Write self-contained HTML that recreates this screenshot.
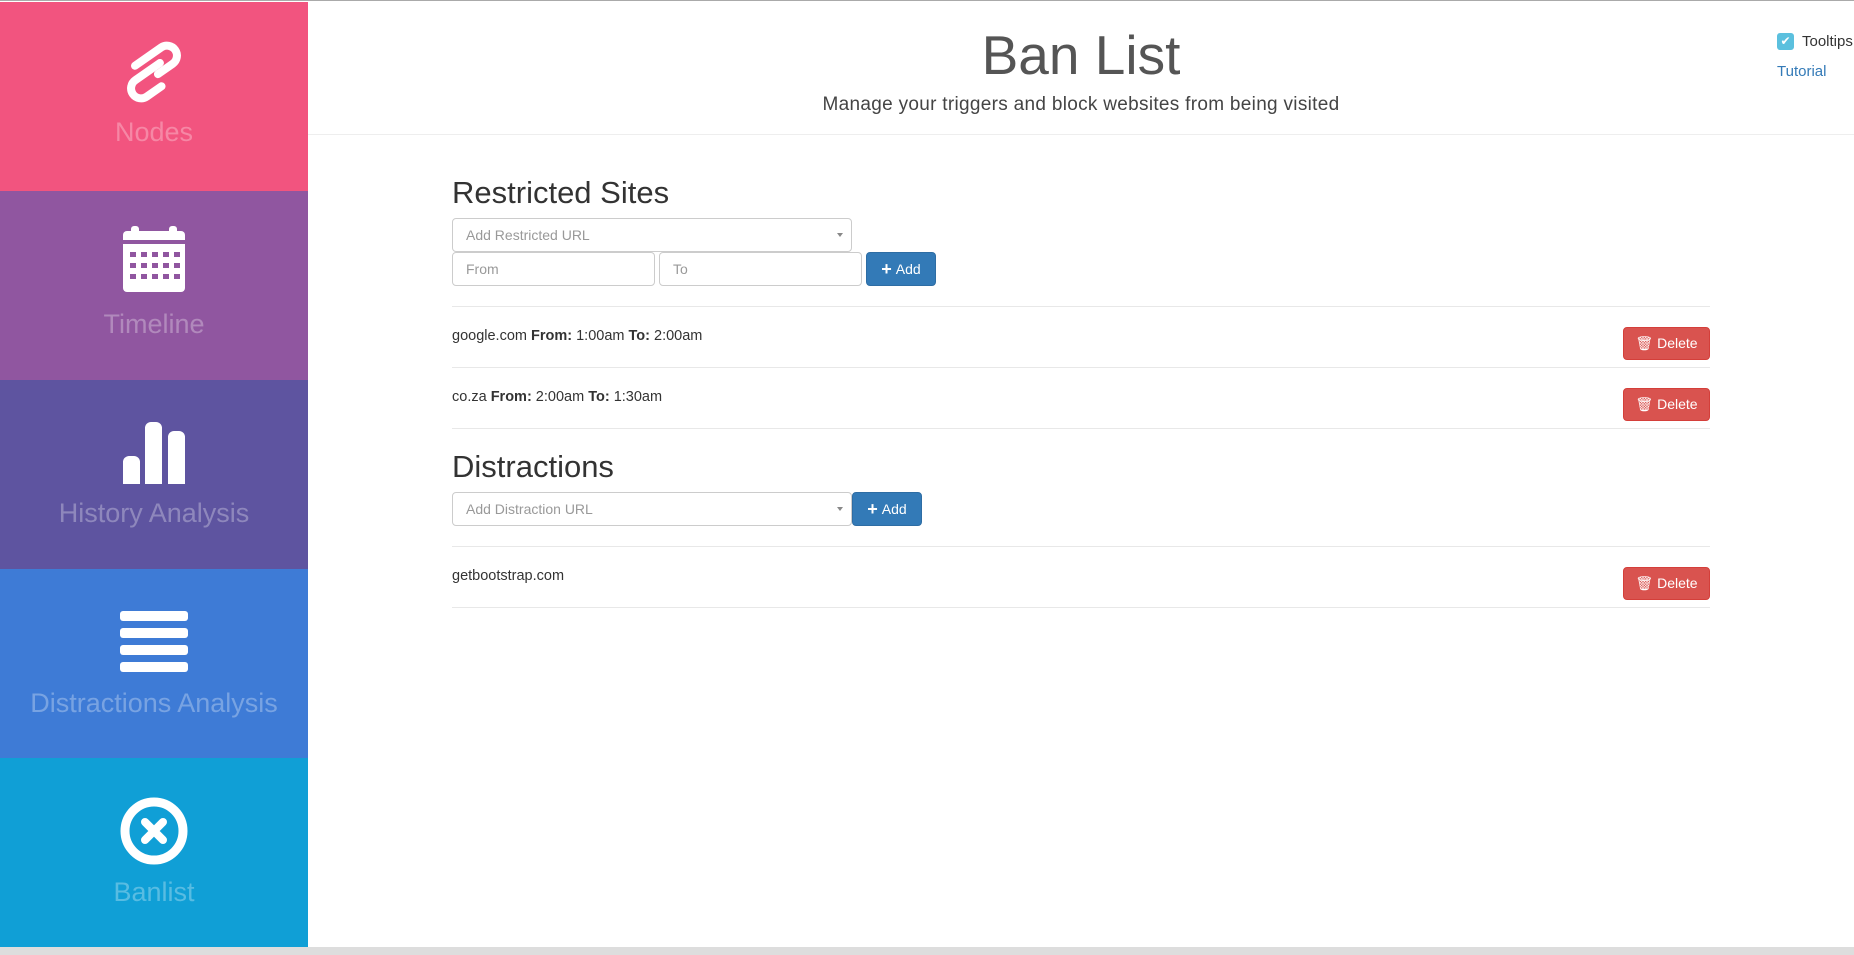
<!DOCTYPE html>
<html><head><meta charset="utf-8"><style>
*{margin:0;padding:0;box-sizing:border-box}
body{width:1854px;height:954px;position:relative;background:#fff;font-family:"Liberation Sans",sans-serif;overflow:hidden;border-top:1px solid #aaa}
.s{position:absolute;left:0;width:308px;text-align:center}
.s .l{position:absolute;left:0;width:308px;font-size:27px;color:rgba(255,255,255,.3);text-align:center}
.s svg{position:absolute;left:50%;transform:translateX(-50%)}
.a{position:absolute}
.inp{position:absolute;border:1px solid #ccc;border-radius:4px;font-size:14px;color:#999;padding-left:13px;display:flex;align-items:center;background:#fff}
.btn{position:absolute;border-radius:4px;color:#fff;font-size:14px;display:flex;align-items:center;justify-content:center}
.add{background:#337ab7;border:1px solid #2e6da4}
.del{background:#d9534f;border:1px solid #d43f3a}
.hr{position:absolute;left:452px;width:1258px;height:1px;background:#e8e8e8}
.row{position:absolute;left:452px;font-size:14.5px;color:#333}
.caret{position:absolute;right:8px;top:50%;margin-top:-2px;border-left:3px solid transparent;border-right:3px solid transparent;border-top:4px solid #888}
</style></head><body>
<div class="s" style="top:1px;height:189px;background:#f2547f">
<svg width="76" height="72" viewBox="0 0 76 72" style="top:34px"><g transform="rotate(-35 38 36)" fill="none" stroke="#fff" stroke-width="8" stroke-linecap="round"><path d="M26 20H58A10 10 0 0 1 58 40H40"/><path d="M48 32H18A10 10 0 0 0 18 52H36"/></g></svg>
<div class="l" style="top:115px">Nodes</div></div>
<div class="s" style="top:190px;height:189px;background:#9056a0">
<svg width="62" height="66" viewBox="0 0 62 66" style="top:35px"><rect x="0" y="5" width="62" height="61" rx="4" fill="#fff"/><rect x="8" y="0" width="8" height="10" rx="3" fill="#fff"/><rect x="46" y="0" width="8" height="10" rx="3" fill="#fff"/><rect x="0" y="14" width="62" height="4" fill="#9056a0"/><g fill="#9056a0"><rect x="7" y="26" width="6" height="5"/><rect x="18" y="26" width="6" height="5"/><rect x="29" y="26" width="6" height="5"/><rect x="40" y="26" width="6" height="5"/><rect x="51" y="26" width="6" height="5"/><rect x="7" y="37" width="6" height="5"/><rect x="18" y="37" width="6" height="5"/><rect x="29" y="37" width="6" height="5"/><rect x="40" y="37" width="6" height="5"/><rect x="51" y="37" width="6" height="5"/><rect x="7" y="48" width="6" height="5"/><rect x="18" y="48" width="6" height="5"/><rect x="29" y="48" width="6" height="5"/><rect x="40" y="48" width="6" height="5"/><rect x="51" y="48" width="6" height="5"/></g></svg>
<div class="l" style="top:118px">Timeline</div></div>
<div class="s" style="top:379px;height:189px;background:#5e54a0">
<svg width="62" height="62" viewBox="0 0 62 62" style="top:42px"><path d="M0 62V40a6 6 0 0 1 6-6h5a6 6 0 0 1 6 6v22zM22 62V6a6 6 0 0 1 6-6h5a6 6 0 0 1 6 6v56zM45 62V15a6 6 0 0 1 6-6h5a6 6 0 0 1 6 6v47z" fill="#fff"/></svg>
<div class="l" style="top:118px">History Analysis</div></div>
<div class="s" style="top:568px;height:189px;background:#3e7bd6">
<svg width="68" height="62" viewBox="0 0 68 62" style="top:42px"><g fill="#fff"><rect x="0" y="0" width="68" height="10" rx="3"/><rect x="0" y="17" width="68" height="10" rx="3"/><rect x="0" y="34" width="68" height="10" rx="3"/><rect x="0" y="51" width="68" height="10" rx="3"/></g></svg>
<div class="l" style="top:119px">Distractions Analysis</div></div>
<div class="s" style="top:757px;height:189px;background:#109fd6">
<svg width="68" height="68" viewBox="0 0 68 68" style="top:39px"><circle cx="34" cy="34" r="29" fill="none" stroke="#fff" stroke-width="9"/><path d="M25 25L43 43M43 25L25 43" stroke="#fff" stroke-width="8" stroke-linecap="round"/></svg>
<div class="l" style="top:119px">Banlist</div></div>
<div class="a" style="left:0;top:946px;width:1854px;height:8px;background:#ddd"></div>

<div class="a" style="left:308px;width:1546px;top:22px;text-align:center;font-size:55px;color:#555">Ban List</div>
<div class="a" style="left:308px;width:1546px;top:93px;text-align:center;font-size:19px;color:#444;letter-spacing:.3px">Manage your triggers and block websites from being visited</div>
<div class="a" style="left:308px;width:1546px;top:133px;height:1px;background:#eee"></div>
<div class="a" style="left:1777px;top:32px;width:17px;height:17px;background:#5bc0de;border-radius:3px;color:#fff;font-size:12px;text-align:center;line-height:17px">✔</div>
<div class="a" style="left:1802px;top:32px;font-size:15px;color:#333">Tooltips</div>
<div class="a" style="left:1777px;top:62px;font-size:15px;color:#337ab7">Tutorial</div>

<div class="a" style="left:452px;top:174px;font-size:31px;color:#333">Restricted Sites</div>
<div class="inp" style="left:452px;top:217px;width:400px;height:34px">Add Restricted URL<span class="caret"></span></div>
<div class="inp" style="left:452px;top:251px;width:203px;height:34px">From</div>
<div class="inp" style="left:659px;top:251px;width:203px;height:34px">To</div>
<div class="btn add" style="left:866px;top:251px;width:70px;height:34px"><b style="font-size:18px;margin-right:4px">+</b>Add</div>
<div class="hr" style="top:305px"></div>
<div class="row" style="top:327px">google.com <b>From:</b> 1:00am <b>To:</b> 2:00am</div>
<div class="btn del" style="left:1623px;top:326px;width:87px;height:33px">🗑&nbsp;Delete</div>
<div class="hr" style="top:366px"></div>
<div class="row" style="top:388px">co.za <b>From:</b> 2:00am <b>To:</b> 1:30am</div>
<div class="btn del" style="left:1623px;top:387px;width:87px;height:33px">🗑&nbsp;Delete</div>
<div class="hr" style="top:427px"></div>
<div class="a" style="left:452px;top:448px;font-size:31px;color:#333">Distractions</div>
<div class="inp" style="left:452px;top:491px;width:400px;height:34px">Add Distraction URL<span class="caret"></span></div>
<div class="btn add" style="left:852px;top:491px;width:70px;height:34px"><b style="font-size:18px;margin-right:4px">+</b>Add</div>
<div class="hr" style="top:545px"></div>
<div class="row" style="top:567px">getbootstrap.com</div>
<div class="btn del" style="left:1623px;top:566px;width:87px;height:33px">🗑&nbsp;Delete</div>
<div class="hr" style="top:606px"></div>
</body></html>
